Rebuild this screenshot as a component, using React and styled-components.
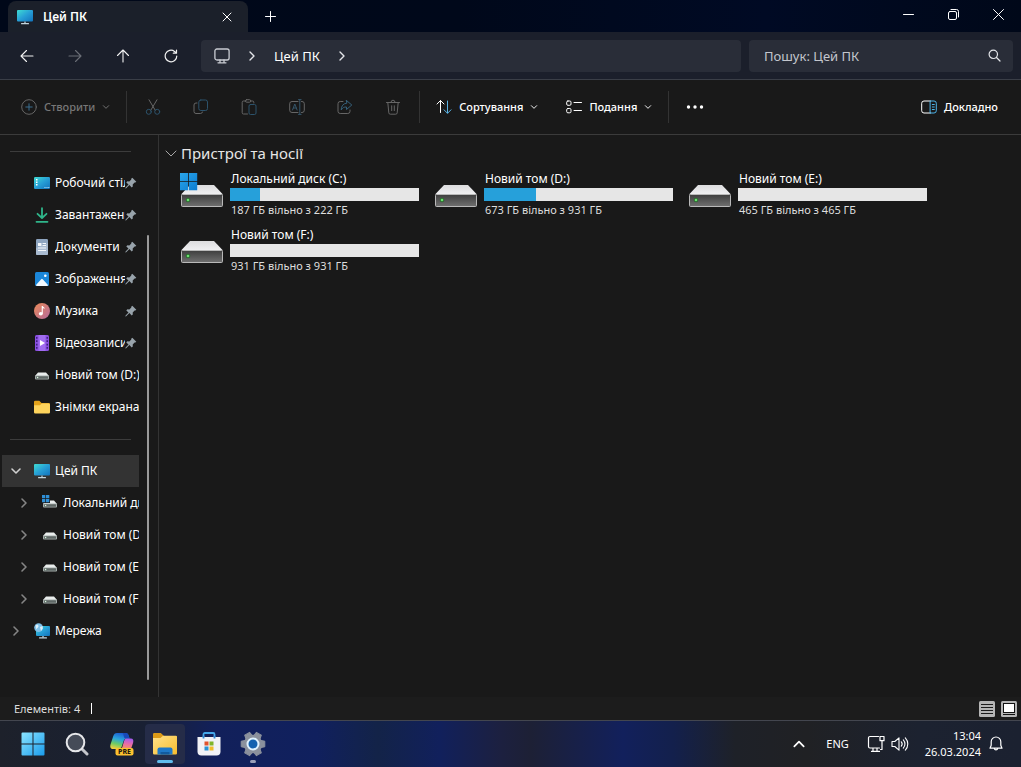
import React from "react";
import styled, { createGlobalStyle, css } from "styled-components";

const GlobalStyle = createGlobalStyle`
  *, *::before, *::after { box-sizing: border-box; }
  body {
    margin: 0;
    background: #191919;
    color: #fff;
    font: 12px/16px "Noto Sans", "Open Sans", sans-serif;
  }
  button, input { font: inherit; color: inherit; }
  svg { display: block; flex: none; }
`;

const Desktop = styled.div`
  min-height: 100vh;
  display: flex;
  flex-direction: column;
`;

const plainButton = css`
  border: 0;
  padding: 0;
  background: transparent;
  display: flex;
  align-items: center;
  justify-content: center;
`;

/* Title bar */
const TitleBar = styled.header`
  height: 32px;
  flex: none;
  display: flex;
  align-items: stretch;
  padding-left: 8px;
  background: linear-gradient(90deg, #000819 0%, #00081a 45%, #000a24 75%, #000819 100%);
`;
const Tab = styled.div`
  width: 240px;
  margin-top: 1px;
  padding: 0 13px 0 9px;
  display: flex;
  align-items: center;
  gap: 10px;
  border-radius: 8px 8px 0 0;
  background: #1b202a;
`;
const TabTitle = styled.h1`
  flex: 1;
  margin: 0;
  font-size: 12px;
  line-height: 16px;
  font-weight: 600;
`;
const TabClose = styled.button`
  ${plainButton}
  width: 16px;
  height: 24px;
`;
const NewTab = styled.button`
  ${plainButton}
  width: 44px;
`;
const WindowControls = styled.div`
  margin-left: auto;
  display: flex;
`;
const WindowButton = styled.button`
  ${plainButton}
  width: 45px;
  padding-bottom: 4px;
`;

/* Navigation row */
const NavBar = styled.nav`
  height: 48px;
  flex: none;
  display: flex;
  align-items: center;
  padding: 0 8px 0 3px;
  background: #1b1f2b;
  border-bottom: 1px solid #3a3e47;
`;
const NavButton = styled.button`
  ${plainButton}
  width: 48px;
  height: 32px;
  color: ${(p) => (p.disabled ? "#6a6e76" : "#f2f2f2")};
`;
const AddressBar = styled.div`
  flex: 1;
  height: 32px;
  margin: 0 8px 0 6px;
  padding-left: 13px;
  display: flex;
  align-items: center;
  border-radius: 4px;
  background: #292d38;
  color: #e4e6ea;
`;
const Crumb = styled.button`
  ${plainButton}
  font-size: 13px;
  line-height: 20px;
  color: #fff;
`;
const CrumbArrow = styled.span`
  display: flex;
  justify-content: center;
  width: 44px;
`;
const SearchBox = styled.label`
  width: 264px;
  height: 32px;
  display: flex;
  align-items: center;
  padding: 0 12px 0 15px;
  border-radius: 4px;
  background: #292d38;
`;
const SearchInput = styled.input`
  flex: 1;
  min-width: 0;
  border: 0;
  padding: 0;
  outline: 0;
  background: transparent;
  font-size: 13px;
  line-height: 20px;
  &::placeholder { color: #c3c6cd; opacity: 1; }
`;

/* Command bar */
const CommandBar = styled.div`
  height: 55px;
  flex: none;
  display: flex;
  align-items: center;
  padding: 0 9px 0 7px;
  background: #191919;
  border-bottom: 1px solid #3b3b3b;
`;
const Command = styled.button`
  ${plainButton}
  gap: 7px;
  height: 36px;
  padding: 0 14px;
  font-size: 11px;
  font-weight: 500;
  color: ${(p) => (p.disabled ? "#777" : "#fff")};
`;
const IconCommand = styled.button`
  ${plainButton}
  width: 48px;
  height: 36px;
`;
const Divider = styled.span`
  width: 1px;
  height: 32px;
  margin: 0 2px;
  background: #333;
`;
const Spacer = styled.span`
  flex: 1;
`;

/* Body */
const Body = styled.div`
  flex: 1;
  display: flex;
  background: #191919;
`;
const Sidebar = styled.aside`
  width: 159px;
  flex: none;
  display: flex;
  border-right: 1px solid #333;
`;
const SideList = styled.div`
  width: 147px;
  padding: 0 8px 0 2px;
`;
const SideRule = styled.hr`
  border: 0;
  height: 32px;
  margin: 0 8px;
  background: linear-gradient(#3c3c3c, #3c3c3c) center / 100% 1px no-repeat;
`;
const sideRow = css`
  ${plainButton}
  width: 100%;
  height: 32px;
  justify-content: flex-start;
  text-align: left;
`;
const QuickLink = styled.button`
  ${sideRow}
  gap: 5px;
  padding-left: 32px;
`;
const TreeItem = styled.button`
  ${sideRow}
  padding-left: ${(p) => 8 + p.$depth * 8}px;
  background: ${(p) => (p.$active ? "#333" : "transparent")};
  color: ${(p) => (p.$active ? "#d0d0d0" : "#858585")};
`;
const TreeIcon = styled.span`
  margin: 0 5px 0 12px;
`;
const SideLabel = styled.span`
  flex: 1;
  min-width: 0;
  overflow: hidden;
  white-space: nowrap;
  color: #fff;
`;
const PinSlot = styled.span`
  margin: 0 2px 0 -5px;
`;
const ScrollTrack = styled.div`
  display: flex;
  padding: 100px 0 17px;
`;
const ScrollThumb = styled.span`
  width: 2px;
  border-radius: 1px;
  background: #9a9a9a;
`;

const Content = styled.main`
  flex: 1;
  min-width: 0;
  padding: 8px 8px 0 6px;
`;
const GroupHeader = styled.h2`
  margin: 0 0 8px;
  display: flex;
  align-items: center;
  gap: 4px;
  font-size: 15px;
  line-height: 20px;
  font-weight: 400;
  color: #e6e6e6;
`;
const DriveGrid = styled.ul`
  list-style: none;
  margin: 0;
  padding: 0 0 0 15px;
  display: grid;
  grid-template-columns: repeat(auto-fill, 254px);
  grid-auto-rows: 56px;
`;
const Drive = styled.li`
  display: flex;
  gap: 6px;
`;
const DriveInfo = styled.div`
  width: 189px;
`;
const DriveName = styled.div`
  padding-left: 1px;
  line-height: 16px;
`;
const DriveBar = styled.div`
  height: 13px;
  margin: 1px 0;
  background: #e6e6e6;
`;
const DriveFill = styled.div`
  height: 100%;
  background: #26a0da;
`;
const DriveSpace = styled.div`
  padding-left: 1px;
  font-size: 11px;
  line-height: 16px;
  color: #dedede;
`;

/* Status bar */
const StatusBar = styled.footer`
  height: 23px;
  flex: none;
  display: flex;
  align-items: center;
  gap: 6px;
  padding: 0 4px 0 14px;
  background: #1c1c1c;
  color: #dedede;
  font-size: 11px;
`;
const Caret = styled.span`
  width: 1px;
  height: 11px;
  margin-left: 5px;
  background: #fff;
`;
const ViewButton = styled.button`
  ${plainButton}
  width: 16px;
  height: 16px;
`;

/* Taskbar */
const Taskbar = styled.div`
  height: 47px;
  flex: none;
  display: flex;
  align-items: center;
  gap: 4px;
  padding: 0 18px 0 13px;
  border-top: 1px solid #43464f;
  background: linear-gradient(
    90deg, #1d212b 0%, #192033 14%, #12205a 21%, #10205e 31%, #132348 37%, #11205c 43%,
    #1c2040 49%, #1d2035 52%, #12205c 61%, #13204c 66%, #1e2128 72%, #202124 79%, #1c2230 90%, #1b2130 100%
  );
`;
const TaskButton = styled.button`
  ${plainButton}
  position: relative;
  width: 40px;
  height: 40px;
  border-radius: 4px;
  background: ${(p) => (p.$active ? "#252c48" : "transparent")};
  &::after {
    content: "";
    position: absolute;
    bottom: 1px;
    width: ${(p) => (p.$active ? "16px" : "6px")};
    height: 3px;
    border-radius: 2px;
    background: ${(p) => (p.$active ? "#60bdee" : p.$running ? "#9a9fb8" : "transparent")};
  }
`;
const TrayButton = styled.button`
  ${plainButton}
  gap: ${(p) => (p.$gap ? p.$gap : 0)}px;
  height: 40px;
`;
const Tray = styled.div`
  margin-left: auto;
  display: flex;
  align-items: center;
  font-size: 11px;
`;
const Language = styled(TrayButton)`
  margin: 0 18px 0 20px;
`;
const Clock = styled.time`
  margin: 0 8px 0 16px;
  text-align: right;
  line-height: 16px;
`;

/* Icons */
const Line = ({ w = 16, h = w, vb, sw = 1, children, ...rest }) => (
  <svg width={w} height={h} viewBox={vb || `0 0 ${w} ${h}`} fill="none" stroke="currentColor"
    strokeWidth={sw} strokeLinecap="round" strokeLinejoin="round" aria-hidden="true" {...rest}>
    {children}
  </svg>
);

const Chevron = ({ dir = "right", size = 12, sw = 1.4 }) => {
  const paths = { right: "M4 2l4 4-4 4", down: "M2 4l4 4 4-4", up: "M2 8l4-4 4 4" };
  return <Line w={size} vb="0 0 12 12" sw={sw}><path d={paths[dir]} /></Line>;
};

const GroupChevron = () => (
  <Line w={12} stroke="#a8a8a8"><path d="M1 4l5 5 5-5" /></Line>
);

const MonitorIcon = () => (
  <svg width="16" height="16" viewBox="0 0 16 16" aria-hidden="true">
    <defs>
      <linearGradient id="screen" x1="0" y1="0" x2="1" y2="1">
        <stop offset="0" stopColor="#3fdcd2" />
        <stop offset="0.5" stopColor="#279fd6" />
        <stop offset="1" stopColor="#1273bd" />
      </linearGradient>
    </defs>
    <rect x="0" y="1" width="16" height="11.5" rx="1" fill="url(#screen)" />
    <path d="M7 12.5h2v2H7z" fill="#7f95a3" />
    <rect x="4" y="14" width="8" height="1.2" rx=".5" fill="#c4d4dc" />
  </svg>
);

const NetworkIcon = () => (
  <svg width="16" height="16" viewBox="0 0 16 16" aria-hidden="true">
    <rect x="2" y="3" width="14" height="10" rx="1" fill="url(#screen)" />
    <path d="M8 13h2v1.5H8z" fill="#7f95a3" />
    <rect x="5" y="14.3" width="8" height="1.2" rx=".5" fill="#c4d4dc" />
    <circle cx="4.6" cy="4.6" r="4.4" fill="#7fc0e8" />
    <path d="M1.5 2.5c2-1.500 3-.5 3 .8S3 5 2.300 6.500zM6 4l2.500-1 .3 2.500L7 8z" fill="#dceffa" />
  </svg>
);

const DesktopIcon = () => (
  <svg width="16" height="16" viewBox="0 0 16 16" aria-hidden="true">
    <rect y="2" width="16" height="12" rx="1.2" fill="url(#screen)" />
    <path d="M2 4h1.500v1.500H2zM2 6.500h1.500V8H2zM2 9h1.500v1.500H2z" fill="#fff" />
    <path d="M10.500 12h1v1h-1zM12.500 12h1v1h-1zM14.300 12h1v1h-1z" fill="#bfe4fa" />
  </svg>
);

const DownloadIcon = () => (
  <Line sw={1.8} stroke="#2fb58a">
    <path d="M8 1.200v9.500M3.500 6.800L8 11l4.500-4.200M2.500 14.800h11" />
  </Line>
);

const DocumentIcon = () => (
  <svg width="16" height="16" viewBox="0 0 16 16" aria-hidden="true">
    <rect x="2" y="0" width="12" height="16" rx="1.200" fill="#8ea5c0" />
    <path d="M2 9l12-5v10.800a1.200 1.200 0 01-1.200 1.200H3.200A1.200 1.200 0 012 14.800z" fill="#a9bbd0" />
    <path d="M4 4h3.500v3H4zM8.500 4H12v1H8.500zM8.500 6H12v1H8.500zM4 8.500h8v1H4zM4 11h8v1H4z" fill="#f4f8fc" />
  </svg>
);

const PicturesIcon = () => (
  <svg width="16" height="16" viewBox="0 0 16 16" aria-hidden="true">
    <rect x="1" y="1" width="14" height="14" rx="1.500" fill="#1b86d8" />
    <path d="M2 14l5.200-5.800a1 1 0 011.500 0L14 14a1 1 0 01-1 1H3a1 1 0 01-1-1z" fill="#f2f9ff" />
    <circle cx="11.300" cy="4.700" r="1.300" fill="#fff" />
  </svg>
);

const MusicIcon = () => (
  <svg width="16" height="16" viewBox="0 0 16 16" aria-hidden="true">
    <defs>
      <linearGradient id="disc" x1="0" y1="0" x2="1" y2="1">
        <stop offset="0" stopColor="#ea8a58" />
        <stop offset="1" stopColor="#b56a9c" />
      </linearGradient>
    </defs>
    <circle cx="8" cy="8" r="8" fill="url(#disc)" />
    <ellipse cx="6.800" cy="10.800" rx="2" ry="1.700" fill="#fff" />
    <path d="M7.700 3h1.100c.3 1.200 1.900 1.200 1.900 2.800-.8-.6-1.300-.7-1.900-.6v5.600H7.700z" fill="#fff" />
  </svg>
);

const VideoIcon = () => (
  <svg width="16" height="16" viewBox="0 0 16 16" aria-hidden="true">
    <rect x="1" y="0" width="14" height="16" rx="1.500" fill="#8a4fe0" />
    <rect x="4.500" width="7" height="16" fill="#a06cf0" />
    <path d="M2 2h1.500v1.800H2zM2 5.300h1.500v1.800H2zM2 8.700h1.500v1.800H2zM2 12h1.500v1.800H2zM12.500 2H14v1.800h-1.500zM12.500 5.300H14v1.800h-1.500zM12.500 8.700H14v1.800h-1.500zM12.500 12H14v1.800h-1.500z" fill="#3d2080" />
    <path d="M6 5l5 3-5 3z" fill="#fff" />
  </svg>
);

const FolderIcon = () => (
  <svg width="16" height="16" viewBox="0 0 16 16" aria-hidden="true">
    <path d="M0 3a1.300 1.300 0 011.300-1.300h4L7.500 4H14.700A1.300 1.300 0 0116 5.300V8H0z" fill="#e3a21a" />
    <path d="M0 6.200h5.800L7.800 4.600H14.700A1.300 1.300 0 0116 5.900v7.300a1.300 1.300 0 01-1.300 1.300H1.300A1.300 1.300 0 010 13.200z" fill="#fdd35c" />
  </svg>
);

const SmallDriveIcon = ({ system }) => (
  <svg width="16" height="16" viewBox="0 0 16 16" aria-hidden="true">
    <path d="M4 5.500h8l3 3.500H1z" fill="#e9edec" />
    <rect x="1" y="8.500" width="14" height="4" rx="1" fill="#aab2b0" />
    <rect x="2" y="9.300" width="12" height="2.400" rx=".5" fill="#5f6866" />
    <circle cx="3.600" cy="10.500" r=".8" fill="#d6f5dc" />
    {system && (
      <>
        <rect x="0" y="0" width="8" height="8" fill="#191919" />
        <path d="M0 0h3.300v3.300H0zM4 0h3.300v3.300H4zM0 4h3.300v3.300H0zM4 4h3.300v3.300H4z" fill="#2f8fd6" />
      </>
    )}
  </svg>
);

const PinIcon = () => (
  <svg width="12" height="12" viewBox="0 0 12 12" aria-hidden="true">
    <path d="M7.300 .8L11.300 4.700l-1 .9-.7-.1-1.900 2 .1 1.900-1.100 1.100-2.300-2.400L1.200 11.200l-.9.300.3-1L3.500 7.600 1.300 5.400l1.100-1.100 1.900.1 2-1.900-.1-.7z" fill="#98a3ab" />
  </svg>
);

const DriveIcon = ({ system }) => (
  <svg width="44" height="37" viewBox="0 0 44 37" aria-hidden="true">
    <defs>
      <linearGradient id="driveTop" x1="0" y1="0" x2="0" y2="1">
        <stop offset="0" stopColor="#dcdcde" />
        <stop offset="1" stopColor="#f0f0f2" />
      </linearGradient>
      <linearGradient id="driveFront" x1="0" y1="0" x2="0" y2="1">
        <stop offset="0" stopColor="#3e3e3e" />
        <stop offset="1" stopColor="#707070" />
      </linearGradient>
      <linearGradient id="winTile" x1="0" y1="0" x2="1" y2="1">
        <stop offset="0" stopColor="#2aa6ea" />
        <stop offset="1" stopColor="#0b7bd0" />
      </linearGradient>
    </defs>
    <path d="M10 14h24l9 9.500H1z" fill="url(#driveTop)" />
    <rect x="1.500" y="23.500" width="41" height="12" rx="1" fill="url(#driveFront)" stroke="#b9b9b9" />
    <circle cx="8" cy="29" r="2.300" fill="#2b6b2f" />
    <circle cx="8" cy="29" r="1.300" fill="#6be070" />
    {system && <path d="M0 2h8.200v8.200H0zM9 2h8.200v8.200H9zM0 11h8.200v8.200H0zM9 11h8.200v8.200H9z" fill="url(#winTile)" />}
  </svg>
);

const dim = "#666";
const dimBlue = "#2c526b";

const CreateIcon = () => (
  <Line stroke={dim}><circle cx="8" cy="8" r="7.300" /><path d="M8 4.800v6.400M4.800 8h6.400" stroke="#3a6f90" /></Line>
);
const CutIcon = () => (
  <Line stroke={dim}>
    <path d="M4 .8l6.200 10.400M12 .8L5.800 11.200" />
    <circle cx="3.800" cy="12.800" r="2.500" stroke={dimBlue} /><circle cx="12.200" cy="12.800" r="2.500" stroke={dimBlue} />
  </Line>
);
const CopyIcon = () => (
  <Line stroke={dim}>
    <path d="M4 4H3a2 2 0 00-2 2v6.500a2 2 0 002 2h4.500a2 2 0 002-1.500" />
    <rect x="5.800" y="1" width="8.700" height="10.500" rx="2" stroke={dimBlue} />
  </Line>
);
const PasteIcon = () => (
  <Line stroke={dim}>
    <path d="M4.500 2H2.500A1.300 1.300 0 001.200 3.300v10.400A1.300 1.300 0 002.500 15h4M9.500 2h2a1.300 1.300 0 011.300 1.300V4" />
    <rect x="4.500" y=".7" width="5.200" height="2.500" rx="1.200" />
    <rect x="8" y="5.500" width="7" height="10" rx="1.500" stroke={dimBlue} />
  </Line>
);
const RenameIcon = () => (
  <Line stroke={dim}>
    <path d="M9 2.500H3A2.300 2.300 0 00.7 4.800v6.400A2.300 2.300 0 003 13.500h6M12.500 2.500h.5a2.300 2.300 0 012.300 2.300v6.400A2.300 2.300 0 0113 13.500h-.5" />
    <path d="M10.800.8v14.400M9.500.6h2.600M9.500 15.400h2.600M3.500 11l2.300-6 2.300 6M4.300 9h3" stroke="#35566b" />
  </Line>
);
const ShareIcon = () => (
  <Line stroke={dim}>
    <path d="M6 2.500H3.200A2.200 2.200 0 001 4.700v7.600a2.200 2.200 0 002.200 2.200h7.600a2.200 2.200 0 002.200-2.200V11" />
    <path d="M9.500 1.500L14.800 6l-5.300 4.500V8C7 7.800 5.500 8.800 4.200 11c0-4 2-6.500 5.300-6.800z" stroke="#35607a" />
  </Line>
);
const DeleteIcon = () => (
  <Line stroke={dim}>
    <path d="M1.500 3.500h13M6 3.200a2 2 0 014 0M2.800 3.500l1 10.300a1.500 1.500 0 001.500 1.400h5.400a1.500 1.500 0 001.500-1.400l1-10.300M6.700 6.800v4.800M9.300 6.800v4.800" />
  </Line>
);
const SortIcon = () => (
  <Line>
    <path d="M4.500 13.500v-12M1 5l3.500-3.500L8 5" />
    <path d="M11.500 2v12M8 10.800l3.500 3.500 3.500-3.500" stroke="#5bb4e5" />
  </Line>
);
const ViewIcon = () => (
  <Line>
    <rect x=".7" y="2" width="4.300" height="4.300" rx="1.200" /><rect x=".7" y="9.500" width="4.300" height="4.300" rx="1.200" />
    <path d="M8 3.500h7.500M8 11.500h7.500" />
  </Line>
);
const DetailsIcon = () => (
  <Line>
    <path d="M9.500 2H3A2.300 2.300 0 00.7 4.300v7.400A2.300 2.300 0 003 14h6.500" />
    <path d="M9.500 2H13a2.300 2.300 0 012.300 2.300v7.400A2.300 2.300 0 0113 14H9.500zM11.300 5.500h2M11.300 8h2M11.300 10.500h2" stroke="#4db4ea" />
  </Line>
);
const DotsIcon = () => (
  <svg width="18" height="4" viewBox="0 0 18 4" fill="#fff" aria-hidden="true">
    <circle cx="2.500" cy="2" r="1.700" /><circle cx="9" cy="2" r="1.700" /><circle cx="15.500" cy="2" r="1.700" />
  </svg>
);

const StartIcon = () => (
  <svg width="24" height="24" viewBox="0 0 24 24" aria-hidden="true">
    <defs>
      <linearGradient id="start" x1="0" y1="0" x2="1" y2="1">
        <stop offset="0" stopColor="#8be4ff" /><stop offset="1" stopColor="#1a9cec" />
      </linearGradient>
    </defs>
    <path d="M1.500.5H11.500v11H.5v-10a1 1 0 011-1zM12.500.5h10a1 1 0 011 1v10h-11zM.5 12.500h11v11h-10a1 1 0 01-1-1zM12.500 12.500h11v10a1 1 0 01-1 1h-10z" fill="url(#start)" />
  </svg>
);
const SearchTaskIcon = () => (
  <svg width="24" height="24" viewBox="0 0 24 24" fill="none" aria-hidden="true">
    <path d="M17 17l5 5" stroke="#c4c6cb" strokeWidth="3" strokeLinecap="round" />
    <circle cx="10.500" cy="10.500" r="8.800" fill="#454b58" stroke="#e6e7ea" strokeWidth="2" />
  </svg>
);
const CopilotIcon = () => (
  <svg width="26" height="26" viewBox="0 0 26 26" aria-hidden="true">
    <defs>
      <linearGradient id="pilotA" x1=".6" y1="0" x2=".3" y2="1">
        <stop offset="0" stopColor="#1b59d0" /><stop offset=".4" stopColor="#2aa5dc" /><stop offset=".7" stopColor="#6ccb66" /><stop offset="1" stopColor="#f0cf3c" />
      </linearGradient>
      <linearGradient id="pilotB" x1=".6" y1="0" x2=".4" y2="1">
        <stop offset="0" stopColor="#a45cf0" /><stop offset=".5" stopColor="#e86aa8" /><stop offset="1" stopColor="#f5965e" />
      </linearGradient>
    </defs>
    <g transform="translate(1 0)">
      <path d="M8 2h8.500c2 0 2.800 1.200 3.300 3l.8 2.500h-3.200c-1.600 0-2.300 1-2.800 2.600l-1.800 5.400C12.200 17 11 18 9.500 18H4.200C1.500 18 .8 16 1.500 13.500L4.300 5C5 3 6 2 8 2z" fill="url(#pilotA)" />
      <path d="M13.500 2h3c2 0 2.800 1.200 3.300 3l.8 2.500h-3.500c-1.500 0-2-1-2.300-2.300C14.500 3.800 14.300 2.500 13.500 2z" fill="#1849b8" />
      <path d="M17.500 7.500h4.300c2.400 0 3 1.800 2.300 4.200L22 18H11c1.500-.3 2-1.200 2.500-2.500l1.500-5.200c.5-1.700 1-2.800 2.500-2.800z" fill="url(#pilotB)" />
      <rect x="6.500" y="17" width="18" height="7.500" rx="2" fill="#fdc22f" />
      <text x="15.500" y="23.300" textAnchor="middle" fontFamily="Noto Sans, sans-serif" fontWeight="800" fontSize="7" fill="#1d1a10">PRE</text>
    </g>
  </svg>
);
const ExplorerIcon = () => (
  <svg width="26" height="24" viewBox="0 0 26 24" aria-hidden="true">
    <defs>
      <linearGradient id="folderFront" x1="0" y1="0" x2="1" y2="1">
        <stop offset="0" stopColor="#ffe18a" /><stop offset="1" stopColor="#f8bd2d" />
      </linearGradient>
    </defs>
    <path d="M1 2.200A1.200 1.200 0 012.200 1h6.600L12 4H23.800A1.200 1.200 0 0125 5.200V10H1z" fill="#dc9a17" />
    <path d="M1 6h7.500L11 3.700h12.800A1.200 1.200 0 0125 5v16.300a1.200 1.200 0 01-1.200 1.200H2.200A1.200 1.200 0 011 21.300z" fill="url(#folderFront)" />
    <path d="M5.500 22.500V17.500a2 2 0 012-2h11a2 2 0 012 2v5z" fill="#1e78c8" />
    <path d="M8.500 20h9v2.500h-9z" fill="#125a9e" />
  </svg>
);
const StoreIcon = () => (
  <svg width="24" height="24" viewBox="0 0 24 24" aria-hidden="true">
    <path d="M6.500 6V2.300A1.300 1.300 0 017.800 1h8.400a1.300 1.300 0 011.300 1.300V6" fill="none" stroke="#45a8ea" strokeWidth="1.800" />
    <path d="M.5 5h23v14.500a4 4 0 01-4 4h-15a4 4 0 01-4-4z" fill="#f1f2f6" />
    <path d="M7.500 9.500h4v4h-4z" fill="#e0532c" /><path d="M12.500 9.500h4v4h-4z" fill="#80b52a" />
    <path d="M7.500 14.500h4v4h-4z" fill="#2a92d2" /><path d="M12.500 14.500h4v4h-4z" fill="#f0bd2c" />
    <path d="M6.500 4v2.500M17.500 4v2.500" stroke="#2d86d0" strokeWidth="1.800" />
  </svg>
);
const SettingsIcon = () => (
  <svg width="26" height="26" viewBox="0 0 26 26" aria-hidden="true">
    {[0, 60, 120, 180, 240, 300].map((a) => (
      <path key={a} d="M9.300 6L10.200 1.200h5.600L16.700 6z" fill="#8b919d" transform={`rotate(${a + 30} 13 13)`} stroke="#8b919d" strokeLinejoin="round" />
    ))}
    <circle cx="13" cy="13" r="9.300" fill="#8b919d" />
    <circle cx="13" cy="13" r="5.500" fill="#1462b0" stroke="#dff2ff" strokeWidth="2" />
  </svg>
);

const quickLinks = [
  { label: "Робочий стіл", Icon: DesktopIcon, pinned: true },
  { label: "Завантаження", Icon: DownloadIcon, pinned: true },
  { label: "Документи", Icon: DocumentIcon, pinned: true },
  { label: "Зображення", Icon: PicturesIcon, pinned: true },
  { label: "Музика", Icon: MusicIcon, pinned: true },
  { label: "Відеозаписи", Icon: VideoIcon, pinned: true },
  { label: "Новий том (D:)", Icon: SmallDriveIcon },
  { label: "Знімки екрана", Icon: FolderIcon },
];

const tree = [
  { label: "Цей ПК", icon: <MonitorIcon />, depth: 0, open: true },
  { label: "Локальний диск (C:)", icon: <SmallDriveIcon system />, depth: 1 },
  { label: "Новий том (D:)", icon: <SmallDriveIcon />, depth: 1 },
  { label: "Новий том (E:)", icon: <SmallDriveIcon />, depth: 1 },
  { label: "Новий том (F:)", icon: <SmallDriveIcon />, depth: 1 },
  { label: "Мережа", icon: <NetworkIcon />, depth: 0 },
];

const drives = [
  { name: "Локальний диск (C:)", free: 187, total: 222, system: true },
  { name: "Новий том (D:)", free: 673, total: 931 },
  { name: "Новий том (E:)", free: 465, total: 465 },
  { name: "Новий том (F:)", free: 931, total: 931 },
];

const fileCommands = [
  ["Вирізати", CutIcon],
  ["Копіювати", CopyIcon],
  ["Вставити", PasteIcon],
  ["Перейменувати", RenameIcon],
  ["Поділитися", ShareIcon],
  ["Видалити", DeleteIcon],
];

export default function App() {
  return (
    <Desktop>
      <GlobalStyle />
      <TitleBar>
        <Tab>
          <MonitorIcon />
          <TabTitle>Цей ПК</TabTitle>
          <TabClose aria-label="Закрити вкладку">
            <Line w={10}><path d="M1 1l8 8M9 1L1 9" /></Line>
          </TabClose>
        </Tab>
        <NewTab aria-label="Нова вкладка">
          <Line w={11}><path d="M5.500.5v10M.5 5.500h10" /></Line>
        </NewTab>
        <WindowControls>
          <WindowButton aria-label="Згорнути"><Line w={11}><path d="M.5 5.500h10" /></Line></WindowButton>
          <WindowButton aria-label="Відновити">
            <Line w={11}>
              <rect x=".5" y="2.500" width="8" height="8" rx="1.500" />
              <path d="M3 .5h5.500a2 2 0 012 2V8" />
            </Line>
          </WindowButton>
          <WindowButton aria-label="Закрити"><Line w={11}><path d="M.5.5l10 10M10.500.5l-10 10" /></Line></WindowButton>
        </WindowControls>
      </TitleBar>

      <NavBar>
        <NavButton aria-label="Назад"><Line w={14} sw={1.1}><path d="M13 7H1M6.500 1.500L1 7l5.500 5.500" /></Line></NavButton>
        <NavButton aria-label="Вперед" disabled><Line w={14} sw={1.1}><path d="M1 7h12M7.500 1.500L13 7l-5.500 5.500" /></Line></NavButton>
        <NavButton aria-label="Вгору"><Line w={14} sw={1.1}><path d="M7 13V1M1.500 6.500L7 1l5.500 5.500" /></Line></NavButton>
        <NavButton aria-label="Оновити">
          <Line w={14} sw={1.2}><path d="M12.800 7A5.800 5.800 0 1110.500 2.400L12.300 4M12.500 1v3.200H9.300" /></Line>
        </NavButton>
        <AddressBar>
          <Line w={16} sw={1.3} stroke="#c9ccd2">
            <rect x=".9" y="1" width="14.200" height="11" rx="2" />
            <path d="M6 12v2.500M10 12v2.500M4 14.800h8" />
          </Line>
          <CrumbArrow><Chevron /></CrumbArrow>
          <Crumb>Цей ПК</Crumb>
          <CrumbArrow><Chevron /></CrumbArrow>
        </AddressBar>
        <SearchBox>
          <SearchInput type="search" placeholder="Пошук: Цей ПК" aria-label="Пошук: Цей ПК" />
          <Line w={13} sw={1.2} stroke="#e4e6ea"><circle cx="5.300" cy="5.300" r="4.200" /><path d="M8.500 8.500L12 12" /></Line>
        </SearchBox>
      </NavBar>

      <CommandBar>
        <Command disabled><CreateIcon />Створити<Chevron dir="down" size={8} /></Command>
        <Divider />
        {fileCommands.map(([label, Icon]) => (
          <IconCommand key={label} aria-label={label} disabled><Icon /></IconCommand>
        ))}
        <Divider />
        <Command><SortIcon />Сортування<Chevron dir="down" size={8} /></Command>
        <Command><ViewIcon />Подання<Chevron dir="down" size={8} /></Command>
        <Divider />
        <IconCommand aria-label="Додатково"><DotsIcon /></IconCommand>
        <Spacer />
        <Command><DetailsIcon />Докладно</Command>
      </CommandBar>

      <Body>
        <Sidebar>
          <SideList>
            <SideRule />
            {quickLinks.map(({ label, Icon, pinned }) => (
              <QuickLink key={label}>
                <Icon />
                <SideLabel>{label}</SideLabel>
                {pinned && <PinSlot><PinIcon /></PinSlot>}
              </QuickLink>
            ))}
            <SideRule />
            {tree.map((item) => (
              <TreeItem key={item.label} $depth={item.depth} $active={item.open}>
                <Chevron dir={item.open ? "down" : "right"} sw={1.6} />
                <TreeIcon>{item.icon}</TreeIcon>
                <SideLabel>{item.label}</SideLabel>
              </TreeItem>
            ))}
          </SideList>
          <ScrollTrack><ScrollThumb /></ScrollTrack>
        </Sidebar>
        <Content>
          <GroupHeader>
            <GroupChevron />
            Пристрої та носії
          </GroupHeader>
          <DriveGrid>
            {drives.map((d) => (
              <Drive key={d.name}>
                <DriveIcon system={d.system} />
                <DriveInfo>
                  <DriveName>{d.name}</DriveName>
                  <DriveBar><DriveFill style={{ width: `${(1 - d.free / d.total) * 100}%` }} /></DriveBar>
                  <DriveSpace>{d.free} ГБ вільно з {d.total} ГБ</DriveSpace>
                </DriveInfo>
              </Drive>
            ))}
          </DriveGrid>
        </Content>
      </Body>

      <StatusBar>
        <span>Елементів: {drives.length}</span>
        <Caret />
        <Spacer />
        <ViewButton aria-label="Таблиця">
          <svg width="16" height="16" viewBox="0 0 16 16" aria-hidden="true">
            <rect width="16" height="16" rx="1.500" fill="#b5b5b5" />
            <path d="M2 3.500h12M2 6.500h12M2 9.500h12M2 12.500h12" stroke="#1c1c1c" />
          </svg>
        </ViewButton>
        <ViewButton aria-label="Великі ескізи">
          <svg width="16" height="16" viewBox="0 0 16 16" aria-hidden="true">
            <rect width="16" height="16" rx="1.500" fill="#b5b5b5" />
            <rect x="2.500" y="2.500" width="11" height="9" fill="#fff" stroke="#111" />
            <path d="M2 13.500h12" stroke="#111" />
          </svg>
        </ViewButton>
      </StatusBar>

      <Taskbar>
        <TaskButton aria-label="Пуск"><StartIcon /></TaskButton>
        <TaskButton aria-label="Пошук"><SearchTaskIcon /></TaskButton>
        <TaskButton aria-label="Copilot"><CopilotIcon /></TaskButton>
        <TaskButton aria-label="Файловий провідник" $active><ExplorerIcon /></TaskButton>
        <TaskButton aria-label="Microsoft Store"><StoreIcon /></TaskButton>
        <TaskButton aria-label="Настройки" $running><SettingsIcon /></TaskButton>
        <Tray>
          <TrayButton aria-label="Приховані піктограми"><Chevron dir="up" size={14} sw={1.5} /></TrayButton>
          <Language>ENG</Language>
          <TrayButton $gap={6} aria-label="Мережа та звук">
            <Line w={18} sw={1.2}>
              <path d="M11.500 1.500H3A1.500 1.500 0 001.500 3v8.500A1.500 1.500 0 003 13h9.500M6 13v3M10 13v3M4.500 16.400h8" />
              <path d="M13 1.500h4v4.200h-4zM15 5.700v8.800M15 14.500h-1.500" />
            </Line>
            <Line w={18} sw={1.1}>
              <path d="M1 6.500h2.800L8 2.800v12.400l-4.200-3.700H1z" />
              <path d="M10.300 6.800a3.500 3.500 0 010 4.400M12.300 4.800a6.200 6.200 0 010 8.400M14.300 2.800a9 9 0 010 12.400" />
            </Line>
          </TrayButton>
          <Clock dateTime="2024-03-26T13:04">13:04<br />26.03.2024</Clock>
          <TrayButton aria-label="Сповіщення">
            <Line w={14} h={16} sw={1.2}>
              <path d="M7 1a4.800 4.800 0 00-4.800 4.800v3.500L1 12.200h12l-1.200-2.900V5.800A4.800 4.800 0 007 1zM5.300 12.500a1.750 1.750 0 003.400 0" />
            </Line>
          </TrayButton>
        </Tray>
      </Taskbar>
    </Desktop>
  );
}
